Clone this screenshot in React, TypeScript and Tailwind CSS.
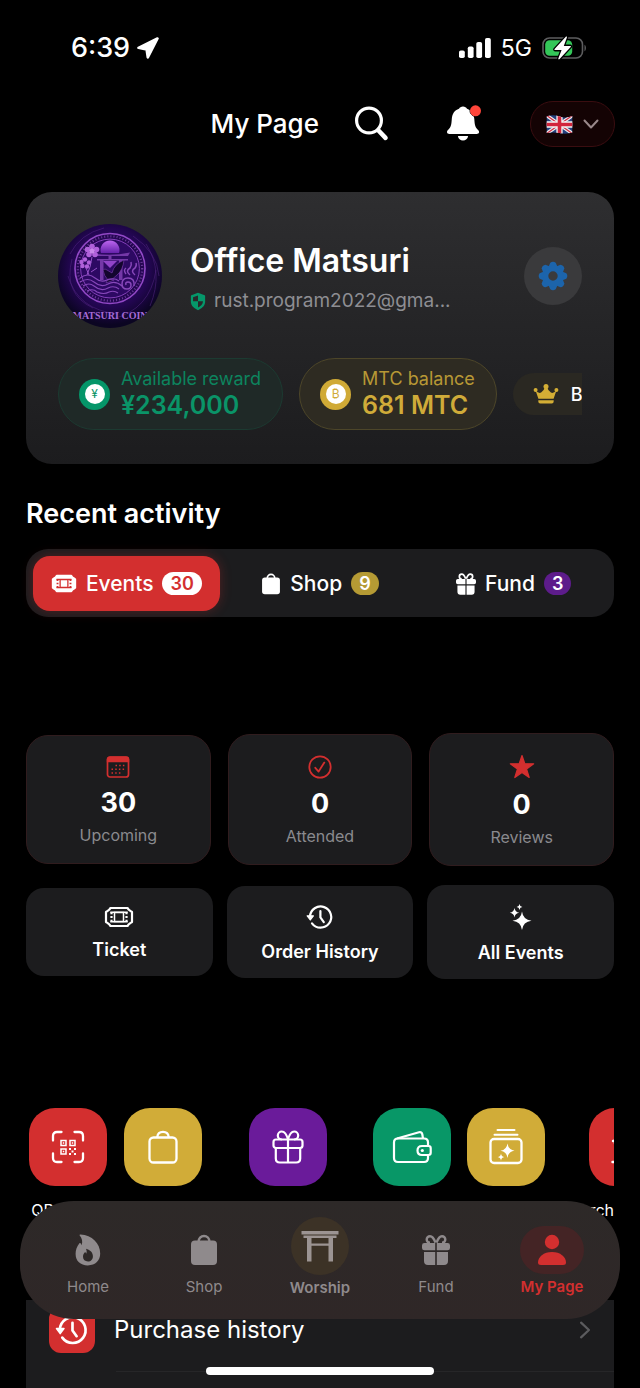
import type { ReactNode } from 'react';

type IconProps = { className?: string };

/* ---------- icons ---------- */

function LocationArrow() {
  return (
    <svg viewBox="0 0 22 22" className="h-[22px] w-[22px]" aria-hidden>
      <path d="M20.500 1.500 10.800 20.300 9.600 12.400 1.500 10.800z" fill="#fff" stroke="#fff" strokeWidth="2.600" strokeLinejoin="round" />
    </svg>
  );
}

function SignalBars() {
  return (
    <svg viewBox="0 0 32 22" className="h-[22px] w-8 fill-white" aria-hidden>
      <rect x="0" y="13.500" width="5.800" height="7.500" rx="1.800" />
      <rect x="8.800" y="9.500" width="5.800" height="11.500" rx="1.800" />
      <rect x="17.300" y="5" width="5.800" height="16" rx="1.800" />
      <rect x="26" y="1" width="5.800" height="20" rx="1.800" />
    </svg>
  );
}

function Battery() {
  return (
    <svg viewBox="0 0 46 28" className="h-7 w-[46px]" aria-hidden>
      <rect x="1" y="4" width="39.500" height="20" rx="6.500" fill="none" stroke="#5d5d5f" strokeWidth="1.600" />
      <path d="M42.500 10.800c1.900.8 1.900 5.600 0 6.400z" fill="#5d5d5f" />
      <rect x="3.200" y="6.200" width="27" height="15.600" rx="4.300" fill="#34c759" />
      <path
        d="M23.800 2.800 12.600 15.100c-.4.500-.1 1 .4 1h6.600l-3.200 8.200c-.4 1 .5 1.500 1.200.8L28.700 13c.4-.5.1-1.100-.5-1.100h-6.400l3.100-8.300c.3-1-.5-1.500-1.100-.8z"
        fill="#fff"
        stroke="#000"
        strokeWidth="2.600"
        paintOrder="stroke"
      />
    </svg>
  );
}

function SearchIcon() {
  return (
    <svg viewBox="0 0 34 36" className="h-9 w-[34px]" fill="none" stroke="#fff" strokeLinecap="round" aria-hidden>
      <circle cx="14" cy="14.500" r="12.400" strokeWidth="3.200" />
      <path d="m23.500 24.500 7 7.300" strokeWidth="4.600" />
    </svg>
  );
}

function BellIcon() {
  return (
    <svg viewBox="0 0 36 38" className="h-[38px] w-9" aria-hidden>
      <path
        d="M16 1.500c2 0 3.200 1 4 2.200 4.600 1.500 7 5.200 7.300 10.300.4 6.100.9 8.300 3.800 11.100.9.900 1.200 1.600.9 2.500-.3 1-1.100 1.400-2.300 1.400H2.300C1.100 29 .3 28.600.1 27.600c-.3-.9 0-1.600.9-2.500 2.900-2.800 3.400-5 3.800-11.100C5.100 8.900 7.400 5.200 12 3.700 12.800 2.500 14 1.500 16 1.500zM10.900 31h10.200c-.4 2.800-2.400 4.600-5.100 4.600s-4.700-1.800-5.100-4.600z"
        fill="#fff"
      />
      <circle cx="28.500" cy="5.800" r="5.500" fill="#ff453a" stroke="#000" strokeWidth="1" paintOrder="stroke" />
    </svg>
  );
}

function UnionFlag() {
  return (
    <svg viewBox="0 0 60 42" className="h-[19px] w-[27px]" aria-hidden>
      <defs>
        <clipPath id="flag">
          <path d="M1 3q14-5 29 0t29-1v37q-14 4-29 1T1 40z" />
        </clipPath>
      </defs>
      <g clipPath="url(#flag)">
        <path d="M0 0h60v42H0z" fill="#24407e" />
        <path d="m0 0 60 42M60 0 0 42" stroke="#eee" strokeWidth="8" />
        <path d="m0 0 60 42M60 0 0 42" stroke="#d22f45" strokeWidth="3" />
        <path d="M30 0v42M0 21h60" stroke="#f3f3f3" strokeWidth="14" />
        <path d="M30 0v42M0 21h60" stroke="#d2253c" strokeWidth="8" />
      </g>
    </svg>
  );
}

function Chevron({ className }: IconProps) {
  return (
    <svg viewBox="0 0 16 16" className={className} fill="none" stroke="currentColor" strokeWidth="2" strokeLinecap="round" strokeLinejoin="round" aria-hidden>
      <path d="m1.500 4.500 6.500 7 6.500-7" />
    </svg>
  );
}

function ShieldIcon() {
  return (
    <svg viewBox="0 0 16 20" className="h-[19px] w-4" aria-hidden>
      <path d="M8 .8 15 3.500c.4.200.5.400.5.800v6c0 4.500-4.100 7.300-7.500 8.900C4.600 17.600.5 14.800.5 10.300v-6c0-.4.100-.6.500-.8z" fill="#05976a" />
      <path d="M8 3.600v6.200H2.800V5.500zM8 9.800h5.200c0 3.300-2.700 5.400-5.200 6.600z" fill="#28282a" />
    </svg>
  );
}

function GearIcon() {
  const teeth = [0, 45, 90, 135, 180, 225, 270, 315];
  return (
    <svg viewBox="-15 -15 30 30" className="h-[30px] w-[30px]" aria-hidden>
      {teeth.map((deg) => (
        <path key={deg} d="M-4.600-9-2.700-13.300Q0-15.300 2.700-13.300L4.600-9z" fill="#1c64ab" transform={`rotate(${deg})`} />
      ))}
      <circle r="7.500" fill="none" stroke="#1c64ab" strokeWidth="5.600" />
    </svg>
  );
}

function CrownIcon() {
  return (
    <svg viewBox="0 0 26 20" className="h-5 w-[26px] fill-[#d4ae35]" aria-hidden>
      <circle cx="13" cy="2.600" r="2.500" />
      <circle cx="2.600" cy="6" r="2" />
      <circle cx="23.400" cy="6" r="2" />
      <path d="M2.500 6.200q3 3.800 5.600 2.300Q10.800 7 12 3h2q1.200 4 3.900 5.500 2.600 1.500 5.600-2.300l-2.900 8.600H5.400zM5.300 16.300h15.400q.2 3.200-2 3.200H7.300q-2.200 0-2-3.200z" />
    </svg>
  );
}

function TicketIcon({ className, solid }: IconProps & { solid?: boolean }) {
  const inner = solid ? '#d32f2f' : 'currentColor';
  return (
    <svg viewBox="0 0 30 22" className={className} fill="none" aria-hidden>
      <path
        d="M6.500 2h17l1.200 1.700 2.300 1.600 1 .7v10l-1 .7-2.300 1.600-1.200 1.700h-17l-1.200-1.700L3 16.700 2 16V6l1-.7 2.300-1.600z"
        stroke="currentColor"
        strokeWidth="2.200"
        strokeLinejoin="round"
        fill={solid ? 'currentColor' : 'none'}
      />
      <path d="M10.500 6.500h9v9h-9z" stroke={inner} strokeWidth="1.500" />
      <path d="M6.300 6.300h17.400M6.300 15.700h17.400" stroke={inner} strokeWidth="1.400" />
      <path d="M7.500 6.200v9.600M22.500 6.200v9.600" stroke={inner} strokeWidth="2.200" strokeDasharray="2 1.800" />
    </svg>
  );
}

function BagIcon({ className }: IconProps) {
  return (
    <svg viewBox="0 0 28 32" className={className} aria-hidden>
      <path d="M8.500 8c0-3.500 2.500-6 5.500-6s5.500 2.500 5.500 6" fill="none" stroke="currentColor" strokeWidth="2.400" />
      <rect x="1" y="6.500" width="26" height="24.500" rx="4" fill="currentColor" />
    </svg>
  );
}

function GiftIcon({ className }: IconProps) {
  return (
    <svg viewBox="0 0 28 32" className={className} fill="currentColor" aria-hidden>
      <path d="M13.500 8.700C12 4.500 10.500 2.200 8 2.200a3.300 3.300 0 0 0 0 6.600M14.500 8.700C16 4.500 17.500 2.200 20 2.200a3.300 3.300 0 0 1 0 6.600" fill="none" stroke="currentColor" strokeWidth="2.400" />
      <path d="M2.500 9h10.700v7.300H2.500Q0 16.300 0 14v-2.600Q0 9 2.500 9zM14.800 9h10.700Q28 9 28 11.400V14q0 2.300-2.500 2.300H14.800zM2 18h11.200v13H6q-4 0-4-4zM14.800 18H26v9q0 4-4 4h-7.200z" />
    </svg>
  );
}

function CalendarIcon({ className }: IconProps) {
  return (
    <svg viewBox="0 0 24 24" className={className} fill="none" stroke="currentColor" aria-hidden>
      <rect x="1.500" y="2" width="21" height="20" rx="2.500" strokeWidth="1.700" />
      <path d="M.8 4.500q0-3 3-3h16.400q3 0 3 3v2.700H.8z" fill="currentColor" stroke="none" />
      <path d="M9.500 10.500h9.500M5.500 14.200H19M5.500 17.900h9.500" strokeWidth="1.500" strokeDasharray="1.500 2.200" />
    </svg>
  );
}

function CheckCircleIcon({ className }: IconProps) {
  return (
    <svg viewBox="0 0 26 26" className={className} fill="none" stroke="currentColor" strokeWidth="1.800" strokeLinecap="round" strokeLinejoin="round" aria-hidden>
      <circle cx="13" cy="13" r="10.700" />
      <path d="m8.300 13.800 3.300 3.800 5.700-9" />
    </svg>
  );
}

function StarIcon({ className }: IconProps) {
  return (
    <svg viewBox="0 0 28 28" className={className} fill="currentColor" stroke="currentColor" strokeWidth="1.200" strokeLinejoin="round" aria-hidden>
      <path d="m14 2.500 2.800 8.300h8.900l-7.100 5.300 2.600 8.400-7.200-5.100-7.200 5.100 2.600-8.400-7.100-5.300h8.900z" />
    </svg>
  );
}

function HistoryIcon({ className }: IconProps) {
  return (
    <svg viewBox="0 0 28 26" className={className} fill="none" stroke="currentColor" strokeWidth="2.200" strokeLinecap="round" strokeLinejoin="round" aria-hidden>
      <path d="M4 12.600A10.600 10.600 0 1 1 6 19.300M14.400 7v6.400l3.400 4.700" />
      <path d="M1.200 11.800h6.200l-3.100 4.200z" fill="currentColor" strokeWidth="1.200" />
    </svg>
  );
}

function SparklesIcon({ className }: IconProps) {
  return (
    <svg viewBox="0 0 28 28" className={className} fill="currentColor" aria-hidden>
      <path d="M15 8.500q1 8.200 9.500 9.200-8.500 1-9.500 9.300-1-8.300-9.500-9.300 8.500-1 9.500-9.200z" />
      <path d="M7.500 5q.6 4.200 4.700 4.700-4.100.6-4.700 4.700-.6-4.100-4.700-4.700Q6.900 9.200 7.500 5zM12.500 1q.3 2.600 2.900 3-2.600.3-2.900 2.900-.3-2.600-2.900-2.900 2.600-.4 2.900-3z" />
    </svg>
  );
}

function QrScanIcon() {
  return (
    <svg viewBox="0 0 34 34" className="h-[34px] w-[34px]" fill="none" stroke="#fff" aria-hidden>
      <path d="M2 10.500V6q0-4 4-4h4.500M23.500 2H28q4 0 4 4v4.500M32 23.500V28q0 4-4 4h-4.500M10.500 32H6q-4 0-4-4v-4.500" strokeWidth="2.300" strokeLinecap="round" />
      <path d="M10 10.500h5v5h-5zM19 10.500h5v5h-5zM10 19h5v5h-5z" strokeWidth="1.500" />
      <path d="M11.800 12.300h1.400v1.400h-1.400zM20.800 12.300h1.400v1.400h-1.400zM11.800 20.800h1.400v1.400h-1.400zM18 18h2v2h-2zM23 18h2v2h-2zM20.500 20.500h2v2h-2zM18 23h2v2h-2zM23 23h2v2h-2z" fill="#fff" stroke="none" />
    </svg>
  );
}

function BagOutlineIcon() {
  return (
    <svg viewBox="0 0 34 36" className="h-9 w-[34px]" fill="none" stroke="#fff" strokeWidth="2.300" aria-hidden>
      <rect x="3.500" y="8.500" width="27" height="25" rx="4" />
      <path d="M11.300 8c.3-3.200 2.700-5.200 5.700-5.200s5.400 2 5.700 5.200" />
    </svg>
  );
}

function GiftOutlineIcon() {
  return (
    <svg viewBox="0 0 34 36" className="h-9 w-[34px]" fill="none" stroke="#fff" strokeWidth="2.200" strokeLinejoin="round" aria-hidden>
      <rect x="2.500" y="10.500" width="29" height="8.500" rx="2.500" />
      <path d="M4.800 19v10.500q0 4 4 4h16.400q4 0 4-4V19M17 10.500v23M17 10.500C15.500 5 13.500 2.500 10.800 2.500a4 4 0 0 0 0 8M17 10.500c1.500-5.500 3.500-8 6.200-8a4 4 0 0 1 0 8" />
    </svg>
  );
}

function WalletIcon() {
  return (
    <svg viewBox="0 0 40 36" className="h-9 w-10" fill="none" stroke="#fff" strokeWidth="2.200" strokeLinejoin="round" aria-hidden>
      <path d="M36 17v-3.500q0-4-4-4H6q-4 0-4 4V29q0 4 4 4h26q4 0 4-4v-3" />
      <path d="m5 9.500 22-6.200q2.800-.7 3.300 2l.7 4.200" />
      <path d="M36.500 17H30q-4.500 0-4.500 4.500T30 26h6.500q2.200 0 2.200-2.200v-4.600q0-2.200-2.200-2.200z" />
      <circle cx="30.300" cy="21.500" r="1.600" fill="#fff" stroke="none" />
    </svg>
  );
}

function CollectionIcon() {
  return (
    <svg viewBox="0 0 36 38" className="h-[38px] w-9" fill="none" stroke="#fff" strokeWidth="2.300" strokeLinecap="round" aria-hidden>
      <rect x="2.500" y="11" width="31" height="24" rx="3.500" />
      <path d="M6.500 6.700h23M9.500 2h17" strokeWidth="2" />
      <path d="M19.500 15.500q.9 6.300 7 7.200-6.100.8-7 7.200-.8-6.400-7-7.200 6.200-.9 7-7.200zM13 25.500q.4 3.100 3.400 3.600-3 .4-3.400 3.600-.4-3.200-3.400-3.600 3-.5 3.400-3.600z" fill="#fff" stroke="none" />
    </svg>
  );
}

function ReceiptIcon() {
  return (
    <svg viewBox="0 0 34 34" className="h-[34px] w-[34px]" fill="none" stroke="#fff" strokeWidth="2.400" strokeLinecap="round" aria-hidden>
      <path d="M2 11h5M1.500 32h6M4 9.500v4M14 4h16M14 17h16M14 30h16" />
    </svg>
  );
}

function FlameIcon() {
  return (
    <svg viewBox="0 0 26 32" className="h-8 w-[26px]" aria-hidden>
      <path
        d="M4.500 1.200C4.700.7 5 .6 5.500.6 17 1 25.200 9.600 25.200 19.600c0 7-4.700 11.800-12.400 11.800C5.400 31.400.6 26.900.6 20c0-4 1.300-7.600 3.800-10.700.5-.6 1.200-.5 1.400.2l.7 1.700C8 7.500 7 4 4.500 1.200z"
        fill="currentColor"
      />
      <path d="M13 27.500c-3 0-5-1.900-5-4.700 0-1.800.7-3.200 1.900-4.500.3-.3.700-.2.800.2l.4 1.200c.8-1.300.7-2.800.1-4.300-.1-.4.1-.6.500-.5 4 1.200 6.200 4 6.200 7.300 0 3.200-2 5.300-4.900 5.300z" fill="#2d2827" />
    </svg>
  );
}

function ToriiIcon() {
  return (
    <svg viewBox="0 0 38 32" className="h-8 w-[38px] fill-current" aria-hidden>
      <path d="M.5 1h37v3.600h-37zM2.500 5.600h33V8h-33zM6 8h4.500v23.500H6zM27.500 8H32v23.500h-4.500zM10.500 13.500h17v2.300h-17z" />
    </svg>
  );
}

function PersonIcon() {
  return (
    <svg viewBox="0 0 28 32" className="h-8 w-7 fill-current" aria-hidden>
      <circle cx="14" cy="8" r="7.200" />
      <path d="M0 28.500c0-5.500 5.700-10.500 14-10.500s14 5 14 10.500q0 2.500-3 2.500H3q-3 0-3-2.500z" />
    </svg>
  );
}

function Avatar() {
  return (
    <svg viewBox="0 0 104 104" className="size-[104px] shrink-0 rounded-full" role="img" aria-label="Matsuri Coin">
      <defs>
        <radialGradient id="avatarBg" cx=".5" cy=".42" r=".55">
          <stop offset="0" stopColor="#42107e" />
          <stop offset=".68" stopColor="#230652" />
          <stop offset="1" stopColor="#0b0522" />
        </radialGradient>
        <linearGradient id="avatarSun" x1="0" y1="0" x2="0" y2="1">
          <stop offset="0" stopColor="#bd66ef" />
          <stop offset="1" stopColor="#6622ac" />
        </linearGradient>
      </defs>
      <path d="M0 0h104v104H0z" fill="url(#avatarBg)" />
      <g fill="none" stroke="#5b2a8c" strokeWidth=".8" opacity=".6">
        <path d="M14 35Q5 70 35 84M88 20q18 28 4 62M10 52q10 34 50 38M75 12q24 16 26 40M12 30q10-20 34-26M98 46Q92 86 54 95" />
      </g>
      <circle cx="52" cy="44.500" r="35" fill="#250753" stroke="#9148c5" strokeWidth="1.600" />
      <circle cx="52" cy="44.500" r="32.200" fill="none" stroke="#6d3a9c" strokeWidth="2.200" strokeDasharray="1 2.100" />
      <circle cx="52" cy="44.500" r="29.400" fill="#2d0963" stroke="#8440b9" strokeWidth="1" />
      <path d="M43 29a9.500 9.500 0 1 1 18 0z" fill="url(#avatarSun)" />
      <path d="M36 29.500q17 3 36-1l-2 3.500H38zM39 35h31v1.500H39zM42 36h3.500v20H42zM61 36h3.500v20H61zM50.500 32h3v4h-3z" fill="#7438a8" />
      <path d="m45 37 7 7 7-7z" fill="#9144c8" />
      <path d="M45 46q2-2 4 0l5 3q2-9 12-13-1 10-7 15-4 5-9 5-4-4-5-10zM50 55l-2 4 8-3z" fill="#13052e" stroke="#8241b4" strokeWidth=".6" />
      <g fill="#b061da">
        <circle cx="34" cy="22.500" r="2.800" />
        <circle cx="38.500" cy="25.500" r="2.800" />
        <circle cx="37" cy="30.500" r="2.800" />
        <circle cx="31" cy="30.500" r="2.800" />
        <circle cx="29.500" cy="25.500" r="2.800" />
        <circle cx="27" cy="35.500" r="2.200" />
        <circle cx="31" cy="38.500" r="2.200" />
        <circle cx="29" cy="42.500" r="2.200" />
        <circle cx="24.500" cy="42" r="2.200" />
        <circle cx="23.500" cy="38" r="2.200" />
      </g>
      <circle cx="34" cy="27" r="2.600" fill="#c988ea" />
      <path d="M34 33q-1 9-5 18M28 44l3 7m2-3 6-4" fill="none" stroke="#9651c7" />
      <g fill="none" stroke="#8747ba" strokeWidth="1.100">
        <path d="M22 54q8-6 15 0 6 5 12 2 7-3 12 1M22 58q8-5 14 0 7 6 14 2t14 2M25 62q6-4 11 0 7 6 14 2 6-3 11 1M29 67q6-3 10 1 7 3 12 0 5-2 9 1" />
        <path d="M76 62q1-8-6-8-6 0-6 6 0 5 5 5 4 0 4-4 0-3-3-3t-2 3M72 51q-5-4 0-7 2-3 1-6M77 51q-5-4 0-7 2-3 1-5M68 50q-3-4 0-6" strokeWidth="1.500" />
      </g>
      <text x="52" y="94.500" textAnchor="middle" fontSize="10" className="fill-[#a56bd6] font-['Liberation_Serif',serif] font-bold">
        MATSURI COIN
      </text>
    </svg>
  );
}

/* ---------- pieces ---------- */

function BalancePill({ symbol, label, value, pill, coin, tint }: { symbol: string; label: string; value: string; pill: string; coin: string; tint: string }) {
  return (
    <div className={`flex h-[72px] shrink-0 items-center gap-[11px] rounded-full border pr-[21px] pl-5 ${pill}`}>
      <span className={`grid size-[31px] place-items-center rounded-full ${coin}`}>
        <span className={`grid size-5 place-items-center rounded-full bg-white text-[12px] leading-none ${tint}`}>{symbol}</span>
      </span>
      <div className={`pb-[2px] whitespace-nowrap ${tint}`}>
        <div className="text-[18px] leading-6 opacity-85">{label}</div>
        <div className="text-[25px] leading-7 font-semibold">{value}</div>
      </div>
    </div>
  );
}

const tabs = [
  { label: 'Events', count: 30, icon: <TicketIcon solid className="h-[19px] w-[26px]" />, tab: 'bg-[#d32f2f] shadow-[0_0_12px_rgba(211,47,47,0.3)]', badge: 'bg-white text-[#d32f2f]' },
  { label: 'Shop', count: 9, icon: <BagIcon className="h-[22px] w-5" />, tab: '', badge: 'bg-[#b59a34] text-white' },
  { label: 'Fund', count: 3, icon: <GiftIcon className="h-6 w-5" />, tab: '', badge: 'bg-[#5d1c8b] text-white' },
];

const stats = [
  { label: 'Upcoming', value: 30, icon: <CalendarIcon className="size-6" /> },
  { label: 'Attended', value: 0, icon: <CheckCircleIcon className="size-[26px]" /> },
  { label: 'Reviews', value: 0, icon: <StarIcon className="size-7" /> },
];

const actions = [
  { label: 'Ticket', icon: <TicketIcon className="h-[22px] w-[30px]" /> },
  { label: 'Order History', icon: <HistoryIcon className="h-[26px] w-7" /> },
  { label: 'All Events', icon: <SparklesIcon className="size-7" /> },
];

const shortcuts = [
  { label: 'QR Ticket', icon: <QrScanIcon />, cell: 'w-[84px]', tile: 'bg-[#d32f2f]' },
  { label: 'Shop', icon: <BagOutlineIcon />, cell: 'w-[84px]', tile: 'bg-[#d1ac38]' },
  { label: 'Fund projects', icon: <GiftOutlineIcon />, cell: 'w-36', tile: 'bg-[#6a1b9a]' },
  { label: 'Wallet', icon: <WalletIcon />, cell: 'w-[82px]', tile: 'bg-[#089767]' },
  { label: 'NFT', icon: <CollectionIcon />, cell: 'w-[84px]', tile: 'bg-[#d1ac38]' },
  { label: 'Purchase items', icon: <ReceiptIcon />, cell: 'w-[138px]', tile: 'bg-[#d32f2f]' },
];

function NavItem({ label, children, className = 'text-[#8f8a8c]' }: { label: string; children: ReactNode; className?: string }) {
  return (
    <a href="#" className={`flex flex-col items-center ${className}`}>
      {children}
      <span className="text-[15px] leading-5">{label}</span>
    </a>
  );
}

export default function App() {
  return (
    <div className="relative flex h-screen flex-col overflow-hidden bg-black font-[Inter,sans-serif] text-white">
      <div className="flex h-24 shrink-0 items-center justify-between pr-[52px] pl-[71px]">
        <div className="flex items-center gap-[7px] text-[27px] font-medium">
          6:39
          <LocationArrow />
        </div>
        <div className="flex items-center gap-[10px] text-[23px]">
          <SignalBars />
          5G
          <Battery />
        </div>
      </div>

      <header className="flex h-14 shrink-0 items-center justify-end pr-[25px]">
        <h1 className="mr-9 text-[26px] leading-8 font-medium">My Page</h1>
        <button aria-label="Search" className="mr-[58px]">
          <SearchIcon />
        </button>
        <button aria-label="Notifications" className="mr-[47px]">
          <BellIcon />
        </button>
        <button aria-label="Language: English" className="flex h-[46px] w-[85px] items-center justify-center gap-[10px] rounded-full border border-[#3a0d10] bg-[#140304]">
          <UnionFlag />
          <Chevron className="size-4 text-[#99888a]" />
        </button>
      </header>

      <main className="flex flex-1 flex-col px-[26px] pt-10">
        <section className="rounded-[26px] bg-linear-to-b from-[#2e2e30] to-[#1c1c1e] px-8 pt-8 pb-[34px]">
          <div className="flex items-center">
            <Avatar />
            <div className="ml-7 min-w-0 flex-1 pt-[6px]">
              <h2 className="text-[32px] leading-10 font-semibold">Office Matsuri</h2>
              <div className="mt-1 flex items-center gap-2 text-[19px] leading-8 text-[#8e8e93]">
                <ShieldIcon />
                <span>rust.program2022@gma...</span>
              </div>
            </div>
            <button aria-label="Settings" className="grid size-[58px] shrink-0 place-items-center rounded-full bg-[#3a3a3c]">
              <GearIcon />
            </button>
          </div>
          <div className="mt-[30px] flex items-center gap-4 overflow-hidden">
            <BalancePill symbol="¥" label="Available reward" value="¥234,000" pill="border-[#1c3a31] bg-[#1f2927]" coin="bg-[#059669]" tint="text-[#0a9468]" />
            <BalancePill symbol="₿" label="MTC balance" value="681 MTC" pill="border-[#4d4629] bg-[#2e2b22]" coin="bg-[#d0aa36]" tint="text-[#d0ab39]" />
            <div className="flex h-[42px] shrink-0 items-center gap-3 rounded-full bg-[#2a2822] px-[20px] text-[18px] font-medium">
              <CrownIcon />
              Bronze
            </div>
          </div>
        </section>

        <h2 className="mt-[34px] text-[27px] leading-8 font-semibold">Recent activity</h2>
        <div role="tablist" className="mt-[19px] grid h-[68px] grid-cols-3 gap-[7px] rounded-[22px] bg-[#1c1c1e] px-[7px] pt-[7px] pb-[6px]">
          {tabs.map((t) => (
            <button key={t.label} role="tab" aria-selected={t.label === 'Events'} className={`flex items-center justify-center gap-[9px] rounded-[17px] text-[21px] font-medium ${t.tab}`}>
              {t.icon}
              {t.label}
              <span className={`rounded-full px-2 text-[18px] leading-[23px] font-semibold ${t.badge}`}>{t.count}</span>
            </button>
          ))}
        </div>

        <div className="mt-[116px] grid grid-cols-3 items-center gap-[17px]">
          {stats.map((s) => (
            <div key={s.label} className="flex flex-col items-center rounded-[22px] border border-[#301c1e] bg-[#1c1c1e] pt-[19px] pb-[18px]">
              <span className="text-[#d32f2f]">{s.icon}</span>
              <span className="mt-2 text-[27px] leading-8 font-bold">{s.value}</span>
              <span className="mt-[6px] text-[16px] leading-5 text-[#8a8a8e]">{s.label}</span>
            </div>
          ))}
        </div>

        <div className="mt-[19px] grid grid-cols-3 items-center gap-[14px]">
          {actions.map((a) => (
            <button key={a.label} className="flex flex-col items-center gap-[10px] rounded-[18px] bg-[#1c1c1e] pt-[18px] pb-[14px]">
              {a.icon}
              <span className="text-[18px] leading-6 font-semibold">{a.label}</span>
            </button>
          ))}
        </div>

        <div className="mt-[129px] flex shrink-0 gap-[11px] overflow-hidden">
          {shortcuts.map((s) => (
            <a key={s.label} href="#" className={`flex shrink-0 flex-col items-center gap-3 ${s.cell}`}>
              <span className={`grid size-[78px] place-items-center rounded-[26px] ${s.tile}`}>{s.icon}</span>
              <span className="text-[16px] leading-6 whitespace-nowrap">{s.label}</span>
            </a>
          ))}
        </div>

        <section className="mt-[78px] flex-1 bg-[#1c1c1e]">
          <a href="#" className="flex h-[60px] items-center pr-5 pl-[23px]">
            <span className="grid size-[46px] place-items-center rounded-[12px] bg-[#d32f2f]">
              <HistoryIcon className="h-8 w-[34px]" />
            </span>
            <span className="ml-[19px] flex-1 text-[24px] leading-8">Purchase history</span>
            <Chevron className="size-[18px] -rotate-90 text-[#5b5b5e]" />
          </a>
          <div className="mt-[11px] ml-[90px] border-t border-[#262628]" />
        </section>
      </main>

      <nav className="absolute inset-x-5 bottom-[69px] grid h-[118px] grid-cols-5 rounded-[54px] bg-linear-to-b from-[#2d2928] to-[#2f2727] px-[10px]">
        <NavItem label="Home">
          <span className="mt-[25px] mb-[3px] grid h-12 place-items-center">
            <FlameIcon />
          </span>
        </NavItem>
        <NavItem label="Shop">
          <span className="mt-[25px] mb-[3px] grid h-12 place-items-center">
            <BagIcon className="h-8 w-7" />
          </span>
        </NavItem>
        <NavItem label="Worship" className="font-semibold text-[#8f8a8c]">
          <span className="mt-4 mb-[3px] grid size-[58px] place-items-center rounded-full bg-[#3c3226] text-[#9c9492]">
            <ToriiIcon />
          </span>
        </NavItem>
        <NavItem label="Fund">
          <span className="mt-[25px] mb-[3px] grid h-12 place-items-center">
            <GiftIcon className="h-8 w-7" />
          </span>
        </NavItem>
        <NavItem label="My Page" className="font-semibold text-[#d32f2f]">
          <span className="mt-[25px] mb-[3px] grid h-12 w-16 place-items-center rounded-full bg-[#442425]">
            <PersonIcon />
          </span>
        </NavItem>
      </nav>

      <div className="absolute bottom-[13px] left-1/2 h-2 w-[228px] -translate-x-1/2 rounded-full bg-white" />
    </div>
  );
}
